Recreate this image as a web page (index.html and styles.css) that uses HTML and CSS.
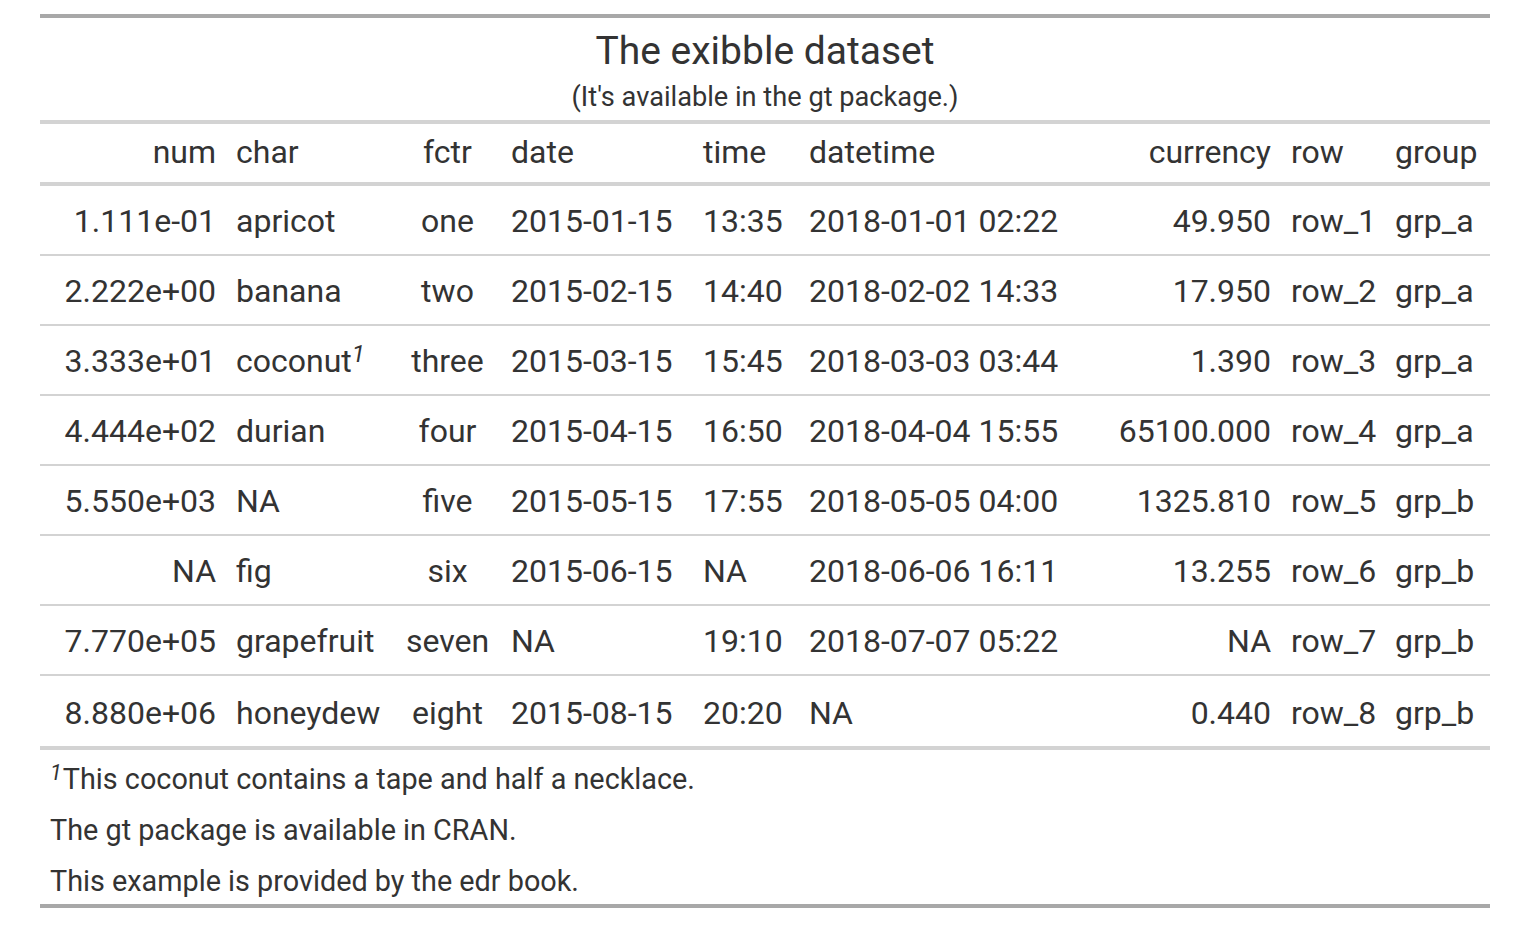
FILE: index.html
```html
<!DOCTYPE html>
<html>
<head>
<meta charset="utf-8">
<title>The exibble dataset</title>
<link rel="stylesheet" href="styles.css">
</head>
<body>
<div class="wrap">
<table class="gt">
  <colgroup>
    <col class="c-num"><col class="c-char"><col class="c-fctr"><col class="c-date"><col class="c-time"><col class="c-datetime"><col class="c-currency"><col class="c-row"><col class="c-group">
  </colgroup>
  <thead>
    <tr><th colspan="9" class="title">The exibble dataset</th></tr>
    <tr><th colspan="9" class="subtitle">(It's available in the gt package.)</th></tr>
    <tr class="labels">
      <th class="r">num</th><th class="l">char</th><th class="c">fctr</th><th class="l">date</th><th class="l">time</th><th class="l">datetime</th><th class="r">currency</th><th class="l">row</th><th class="l">group</th>
    </tr>
  </thead>
  <tbody>
    <tr><td class="r">1.111e-01</td><td class="l">apricot</td><td class="c">one</td><td class="l">2015-01-15</td><td class="l">13:35</td><td class="l">2018-01-01 02:22</td><td class="r">49.950</td><td class="l">row_1</td><td class="l">grp_a</td></tr>
    <tr><td class="r">2.222e+00</td><td class="l">banana</td><td class="c">two</td><td class="l">2015-02-15</td><td class="l">14:40</td><td class="l">2018-02-02 14:33</td><td class="r">17.950</td><td class="l">row_2</td><td class="l">grp_a</td></tr>
    <tr><td class="r">3.333e+01</td><td class="l">coconut<span class="mark">1</span></td><td class="c">three</td><td class="l">2015-03-15</td><td class="l">15:45</td><td class="l">2018-03-03 03:44</td><td class="r">1.390</td><td class="l">row_3</td><td class="l">grp_a</td></tr>
    <tr><td class="r">4.444e+02</td><td class="l">durian</td><td class="c">four</td><td class="l">2015-04-15</td><td class="l">16:50</td><td class="l">2018-04-04 15:55</td><td class="r">65100.000</td><td class="l">row_4</td><td class="l">grp_a</td></tr>
    <tr><td class="r">5.550e+03</td><td class="l">NA</td><td class="c">five</td><td class="l">2015-05-15</td><td class="l">17:55</td><td class="l">2018-05-05 04:00</td><td class="r">1325.810</td><td class="l">row_5</td><td class="l">grp_b</td></tr>
    <tr><td class="r">NA</td><td class="l">fig</td><td class="c">six</td><td class="l">2015-06-15</td><td class="l">NA</td><td class="l">2018-06-06 16:11</td><td class="r">13.255</td><td class="l">row_6</td><td class="l">grp_b</td></tr>
    <tr><td class="r">7.770e+05</td><td class="l">grapefruit</td><td class="c">seven</td><td class="l">NA</td><td class="l">19:10</td><td class="l">2018-07-07 05:22</td><td class="r">NA</td><td class="l">row_7</td><td class="l">grp_b</td></tr>
    <tr class="last"><td class="r">8.880e+06</td><td class="l">honeydew</td><td class="c">eight</td><td class="l">2015-08-15</td><td class="l">20:20</td><td class="l">NA</td><td class="r">0.440</td><td class="l">row_8</td><td class="l">grp_b</td></tr>
  </tbody>
  <tfoot>
    <tr class="fn first"><td colspan="9"><span class="mark fmark">1</span>This coconut contains a tape and half a necklace.</td></tr>
    <tr class="fn"><td colspan="9">The gt package is available in CRAN.</td></tr>
    <tr class="fn final"><td colspan="9">This example is provided by the edr book.</td></tr>
  </tfoot>
</table>
</div>
</body>
</html>
```

FILE: styles.css
```css
html, body {
  margin: 0;
  padding: 0;
  background: #FFFFFF;
}

.wrap {
  padding: 14px 0 0 40px;
}

.gt {
  font-family: Roboto, "Liberation Sans", Arial, sans-serif;
  color: #333333;
  font-size: 32px;
  border-collapse: separate;
  border-spacing: 0;
  table-layout: fixed;
  width: 1450px;
}

.c-num { width: 186px; }
.c-char { width: 168px; }
.c-fctr { width: 107px; }
.c-date { width: 192px; }
.c-time { width: 106px; }
.c-datetime { width: 294px; }
.c-currency { width: 188px; }
.c-row { width: 104px; }
.c-group { width: 105px; }

.gt th, .gt td {
  font-weight: normal;
  white-space: nowrap;
  padding-left: 10px;
  padding-right: 10px;
}

.title {
  border-top: 4px solid #A8A8A8;
  font-size: 39px;
  line-height: 46px;
  padding-top: 10px;
  padding-bottom: 8px;
  text-align: center;
}

.subtitle {
  font-size: 27.2px;
  line-height: 28px;
  padding-top: 1px;
  padding-bottom: 9px;
  text-align: center;
  border-bottom: 4px solid #D3D3D3;
}

.labels th {
  line-height: 36px;
  padding-top: 10px;
  padding-bottom: 12px;
  border-bottom: 4px solid #D3D3D3;
}

.gt tbody td {
  line-height: 36px;
  padding-top: 17px;
  padding-bottom: 15px;
  border-bottom: 2px solid #D3D3D3;
}

.gt tbody tr.last td {
  padding-top: 19px;
  padding-bottom: 15px;
  border-bottom: 4px solid #D3D3D3;
}

.l { text-align: left; }
.r { text-align: right; }
.c { text-align: center; }

.mark {
  font-style: italic;
  font-size: 75%;
  vertical-align: 0.4em;
  line-height: 0;
}

.fmark {
  padding-left: 0;
  padding-right: 1px;
}

.fn td {
  font-size: 28.8px;
  line-height: 35px;
  padding-top: 11px;
  padding-bottom: 5px;
}

.fn.first td {
  padding-top: 12px;
}

.fn.final td {
  border-bottom: 4px solid #A8A8A8;
}
```
